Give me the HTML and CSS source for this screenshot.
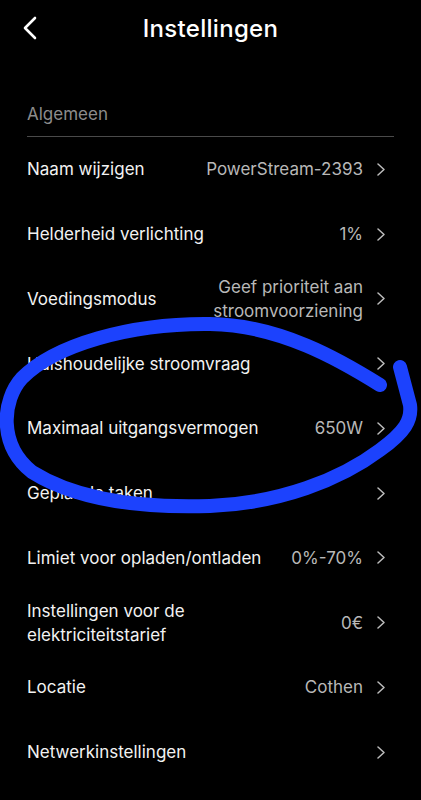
FILE: index.html
```html
<!DOCTYPE html>
<html lang="nl">
<head>
<meta charset="utf-8">
<title>Instellingen</title>
<link rel="stylesheet" href="styles.css">
</head>
<body>
<div class="page">
  <header class="topbar">
    <span class="back">
      <svg width="14" height="24" viewBox="0 0 14 24"><path d="M12 2 L2 12 L12 22" fill="none" stroke="#fff" stroke-width="2.6" stroke-linecap="round" stroke-linejoin="round"/></svg>
    </span>
    <h1 class="title">Instellingen</h1>
  </header>
  <section class="group">
    <div class="group-label">Algemeen</div>
    <div class="row"><span class="label">Naam wijzigen</span><span class="value">PowerStream-2393</span><svg class="chev" width="8" height="13" viewBox="0 0 8 13"><path d="M1 1 L7 6.5 L1 12" fill="none" stroke="#bcbcbc" stroke-width="1.5" stroke-linecap="round" stroke-linejoin="round"/></svg></div>
    <div class="row"><span class="label">Helderheid verlichting</span><span class="value">1%</span><svg class="chev" width="8" height="13" viewBox="0 0 8 13"><path d="M1 1 L7 6.5 L1 12" fill="none" stroke="#bcbcbc" stroke-width="1.5" stroke-linecap="round" stroke-linejoin="round"/></svg></div>
    <div class="row"><span class="label">Voedingsmodus</span><span class="value">Geef prioriteit aan<br>stroomvoorziening</span><svg class="chev" width="8" height="13" viewBox="0 0 8 13"><path d="M1 1 L7 6.5 L1 12" fill="none" stroke="#bcbcbc" stroke-width="1.5" stroke-linecap="round" stroke-linejoin="round"/></svg></div>
    <div class="row"><span class="label">Huishoudelijke stroomvraag</span><span class="value"></span><svg class="chev" width="8" height="13" viewBox="0 0 8 13"><path d="M1 1 L7 6.5 L1 12" fill="none" stroke="#bcbcbc" stroke-width="1.5" stroke-linecap="round" stroke-linejoin="round"/></svg></div>
    <div class="row"><span class="label">Maximaal uitgangsvermogen</span><span class="value">650W</span><svg class="chev" width="8" height="13" viewBox="0 0 8 13"><path d="M1 1 L7 6.5 L1 12" fill="none" stroke="#bcbcbc" stroke-width="1.5" stroke-linecap="round" stroke-linejoin="round"/></svg></div>
    <div class="row"><span class="label">Geplande taken</span><span class="value"></span><svg class="chev" width="8" height="13" viewBox="0 0 8 13"><path d="M1 1 L7 6.5 L1 12" fill="none" stroke="#bcbcbc" stroke-width="1.5" stroke-linecap="round" stroke-linejoin="round"/></svg></div>
    <div class="row"><span class="label">Limiet voor opladen/ontladen</span><span class="value">0%-70%</span><svg class="chev" width="8" height="13" viewBox="0 0 8 13"><path d="M1 1 L7 6.5 L1 12" fill="none" stroke="#bcbcbc" stroke-width="1.5" stroke-linecap="round" stroke-linejoin="round"/></svg></div>
    <div class="row"><span class="label">Instellingen voor de<br>elektriciteitstarief</span><span class="value">0€</span><svg class="chev" width="8" height="13" viewBox="0 0 8 13"><path d="M1 1 L7 6.5 L1 12" fill="none" stroke="#bcbcbc" stroke-width="1.5" stroke-linecap="round" stroke-linejoin="round"/></svg></div>
    <div class="row"><span class="label">Locatie</span><span class="value">Cothen</span><svg class="chev" width="8" height="13" viewBox="0 0 8 13"><path d="M1 1 L7 6.5 L1 12" fill="none" stroke="#bcbcbc" stroke-width="1.5" stroke-linecap="round" stroke-linejoin="round"/></svg></div>
    <div class="row"><span class="label">Netwerkinstellingen</span><span class="value"></span><svg class="chev" width="8" height="13" viewBox="0 0 8 13"><path d="M1 1 L7 6.5 L1 12" fill="none" stroke="#bcbcbc" stroke-width="1.5" stroke-linecap="round" stroke-linejoin="round"/></svg></div>
  </section>
  <svg class="scribble" width="421" height="800" viewBox="0 0 421 800">
    <path d="M380,385 C340,360 280,325 210,324 C130,323 55,345 22,378 C2,400 -2,445 32,472 C80,502 150,508 210,506 C280,503 340,480 380,450 C405,432 412,420 410,405 L400,367" fill="none" stroke="#1c42fd" stroke-width="14" stroke-linecap="round" stroke-linejoin="round"/>
  </svg>
</div>
</body>
</html>
```

FILE: styles.css
```css
* { box-sizing: border-box; }
html, body {
  margin: 0;
  padding: 0;
  background: #000;
}
body {
  font-family: Inter, "Open Sans", "Liberation Sans", sans-serif;
  color: #f2f2f2;
}
.page {
  position: relative;
  width: 421px;
  height: 800px;
  overflow: hidden;
}
.topbar {
  position: relative;
  height: 56px;
  display: flex;
  align-items: center;
  justify-content: center;
}
.back {
  position: absolute;
  left: 23px;
  top: 16px;
  display: flex;
}
.title {
  margin: 0;
  font-size: 24px;
  font-weight: 500;
  color: #fff;
  letter-spacing: 0.3px;
}
.group {
  padding: 0 27px;
}
.group-label {
  margin-top: 47px;
  line-height: 22px;
  padding-bottom: 11px;
  font-size: 17px;
  color: #8c8c8c;
  border-bottom: 1px solid #4a4a4a;
}
.row {
  height: 64.75px;
  display: flex;
  align-items: center;
  padding-right: 9px;
  font-size: 17px;
  line-height: 24px;
}
.label {
  flex: 1;
  color: #f2f2f2;
}
.value {
  color: #b8b8b8;
  text-align: right;
  white-space: nowrap;
}
.chev {
  flex: none;
  margin-left: 14px;
}
.scribble {
  position: absolute;
  left: 0;
  top: 0;
  pointer-events: none;
}
```
